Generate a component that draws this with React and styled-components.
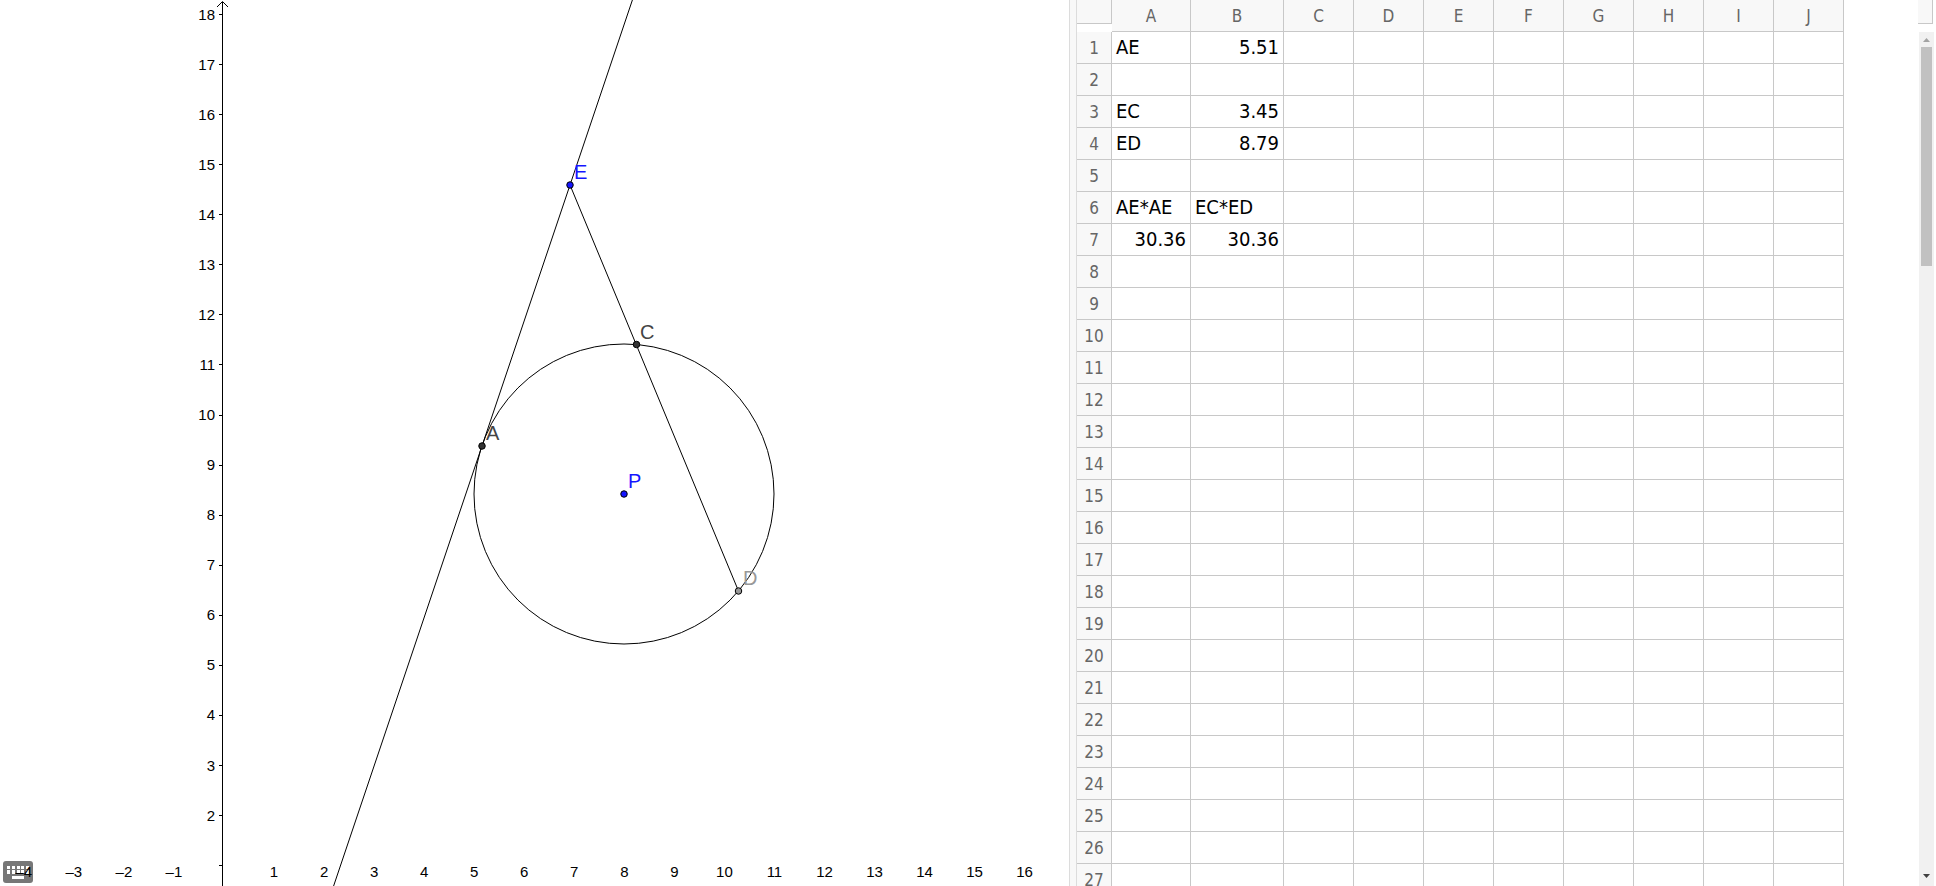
import { createGlobalStyle, styled } from "styled-components";

const GlobalStyle = createGlobalStyle`
  body {
    margin: 0;
    background-color: #fff;
    overflow: hidden;
  }
`;

const Page = styled.main`
  display: flex;
  height: 100vh;
  overflow: hidden;
`;

const GraphView = styled.section`
  flex: 1;
  min-width: 0;
  position: relative;
  overflow: hidden;

  /* the plot lies over the keyboard button but lets clicks through */
  svg.plot {
    display: block;
    position: relative;
    width: 100%;
    height: 100%;
    pointer-events: none;
  }
`;

const TickLabel = styled.text`
  font-family: "Liberation Sans", Arial, sans-serif;
  font-size: 15px;
  fill: #000;
  text-anchor: ${(props) => props.$anchor};
`;

const PointLabel = styled.text`
  font-family: "Liberation Sans", Arial, sans-serif;
  font-size: 20px;
  fill: ${(props) => props.$color};
`;

const KeyboardButton = styled.button`
  position: absolute;
  left: 3px;
  bottom: 3px;
  width: 30px;
  height: 22px;
  padding: 0;
  border: none;
  background: none;
  cursor: pointer;

  svg {
    display: block;
  }
`;

const Divider = styled.div`
  width: 6px;
  flex-shrink: 0;
  background-color: #f8f8f8;
  border-left: 1px solid #dcdcdc;
  border-right: 1px solid #dcdcdc;
`;

const SheetView = styled.section`
  flex: 0 0 859px;
  display: flex;
  overflow: hidden;
`;

const SheetBody = styled.div`
  flex: 1;
  min-width: 0;
  overflow: hidden;
`;

const Sheet = styled.table`
  table-layout: fixed;
  width: 767px;
  border-collapse: separate;
  border-spacing: 0;
  font-family: "DejaVu Sans Condensed", "DejaVu Sans", sans-serif;

  th,
  td {
    box-sizing: border-box;
    height: 32px;
    padding: 0 4px 1px;
    border-right: 1px solid #c8c8c8;
    border-bottom: 1px solid #c8c8c8;
    line-height: 24px;
    white-space: nowrap;
  }

  th {
    padding: 0;
    font-size: 17px;
    font-weight: normal;
    text-align: center;
    color: #666;
    background-color: #f8f8f8;
  }

  td.corner {
    padding: 0;
    border: none;
    vertical-align: top;
  }
`;

const Corner = styled.div`
  box-sizing: border-box;
  height: 24px;
  background-color: #f8f8f8;
  border-right: 1px solid #c8c8c8;
  border-bottom: 1px solid #c8c8c8;
`;

const Cell = styled.td`
  font-size: 20px;
  color: #000;
  text-align: ${(props) => (props.$number ? "right" : "left")};
`;

const ScrollColumn = styled.div`
  width: 18px;
  display: flex;
  flex-direction: column;
  gap: 8px;
`;

const ScrollCorner = styled(Corner)`
  width: 15px;
  flex-shrink: 0;
`;

const ScrollTrack = styled.div`
  flex: 1;
  width: 15px;
  margin-left: 1px;
  display: flex;
  flex-direction: column;
  align-items: center;
  background-color: #f1f1f1;
`;

const ScrollArrow = styled.button`
  width: 15px;
  height: 15px;
  padding: 0;
  border: none;
  background: none;
  color: ${(props) => props.$color};

  svg {
    display: block;
  }
`;

const ScrollThumb = styled.div`
  width: 11px;
  height: 219px;
  background-color: #c1c1c1;
`;

const ScrollSpace = styled.div`
  flex: 1;
`;

// graph units to pixels
const toX = (x) => 222.5 + x * 50.04;
const toY = (y) => 14.5 + (18 - y) * 50.07;

const xTicks = [-4, -3, -2, -1, 1, 2, 3, 4, 5, 6, 7, 8, 9, 10, 11, 12, 13, 14, 15, 16];
const yTicks = Array.from({ length: 18 }, (_, i) => i + 1);

const points = [
  { name: "A", x: 482, y: 446, lx: 486, ly: 440, fill: "#333", color: "#444" },
  { name: "C", x: 636.5, y: 344.5, lx: 640, ly: 339, fill: "#333", color: "#444" },
  { name: "D", x: 738.5, y: 591, lx: 743, ly: 585, fill: "#999", color: "#999" },
  { name: "E", x: 570, y: 185, lx: 574, ly: 179, fill: "#1515ff", color: "#1515ff" },
  { name: "P", x: 624, y: 494, lx: 628, ly: 488, fill: "#1515ff", color: "#1515ff" },
];

const columns = ["A", "B", "C", "D", "E", "F", "G", "H", "I", "J"];
const widths = [35, 79, 93, 70, 70, 70, 70, 70, 70, 70, 70];
const rows = Array.from({ length: 27 }, (_, i) => i + 1);

const cells = {
  A1: "AE",
  B1: 5.51,
  A3: "EC",
  B3: 3.45,
  A4: "ED",
  B4: 8.79,
  A6: "AE*AE",
  B6: "EC*ED",
  A7: 30.36,
  B7: 30.36,
};

const Keyboard = () => (
  <svg width="30" height="22" viewBox="0 0 30 22">
    <rect width="30" height="22" rx="3" fill="#777" />
    <g fill="#fff">
      {[4, 9, 14, 18, 23].map((x) => (
        <g key={x}>
          <rect x={x} y="5" width="3" height="3" />
          <rect x={x} y="9" width="3" height="4" />
        </g>
      ))}
      <rect x="9" y="15" width="12" height="3" />
    </g>
  </svg>
);

const Plot = () => (
  <svg className="plot">
    <g stroke="#000" fill="none">
      <path d="M222.5 2V886M217 7L222.5 1.5L228 7" />
      {yTicks.map((n) => (
        <path key={n} d={`M219 ${Math.floor(toY(n)) + 0.5}H222`} />
      ))}
    </g>
    {yTicks.slice(1).map((n) => (
      <TickLabel key={n} $anchor="end" x="215" y={Math.round(toY(n) + 5)}>
        {n}
      </TickLabel>
    ))}
    {xTicks.map((n) => (
      <TickLabel key={n} $anchor="middle" x={toX(n) + 1.5} y="877">
        {n < 0 ? `–${-n}` : n}
      </TickLabel>
    ))}
    <g stroke="#000" fill="none">
      <circle cx="624" cy="494" r="150" />
      <line x1="632.4" y1="0" x2="333.6" y2="886" />
      <line x1="570" y1="185" x2="738.5" y2="591" />
    </g>
    {points.map((p) => (
      <g key={p.name}>
        <circle cx={p.x} cy={p.y} r="3.25" fill={p.fill} stroke="#000" />
        <PointLabel $color={p.color} x={p.lx} y={p.ly}>
          {p.name}
        </PointLabel>
      </g>
    ))}
  </svg>
);

const Spreadsheet = () => (
  <Sheet>
    <colgroup>
      {widths.map((w, i) => (
        <col key={i} width={w} />
      ))}
    </colgroup>
    <thead>
      <tr>
        <td className="corner">
          <Corner />
        </td>
        {columns.map((c) => (
          <th key={c} scope="col">
            {c}
          </th>
        ))}
      </tr>
    </thead>
    <tbody>
      {rows.map((r) => (
        <tr key={r}>
          <th scope="row">{r}</th>
          {columns.map((c) => (
            <Cell key={c} $number={typeof cells[c + r] === "number"}>
              {cells[c + r]}
            </Cell>
          ))}
        </tr>
      ))}
    </tbody>
  </Sheet>
);

const App = () => {
  return (
    <>
      <GlobalStyle />
      <Page>
        <GraphView>
          <KeyboardButton aria-label="Keyboard">
            <Keyboard />
          </KeyboardButton>
          <Plot />
        </GraphView>
        <Divider />
        <SheetView>
          <SheetBody>
            <Spreadsheet />
          </SheetBody>
          <ScrollColumn>
            <ScrollCorner />
            <ScrollTrack>
              <ScrollArrow $color="#a3a3a3" aria-label="Scroll up">
                <svg width="15" height="15">
                  <path d="M4 10L7.5 6L11 10Z" fill="currentColor" />
                </svg>
              </ScrollArrow>
              <ScrollThumb />
              <ScrollSpace />
              <ScrollArrow $color="#404040" aria-label="Scroll down">
                <svg width="15" height="15">
                  <path d="M4 3L7.5 7L11 3Z" fill="currentColor" />
                </svg>
              </ScrollArrow>
            </ScrollTrack>
          </ScrollColumn>
        </SheetView>
      </Page>
    </>
  );
};

export default App;
